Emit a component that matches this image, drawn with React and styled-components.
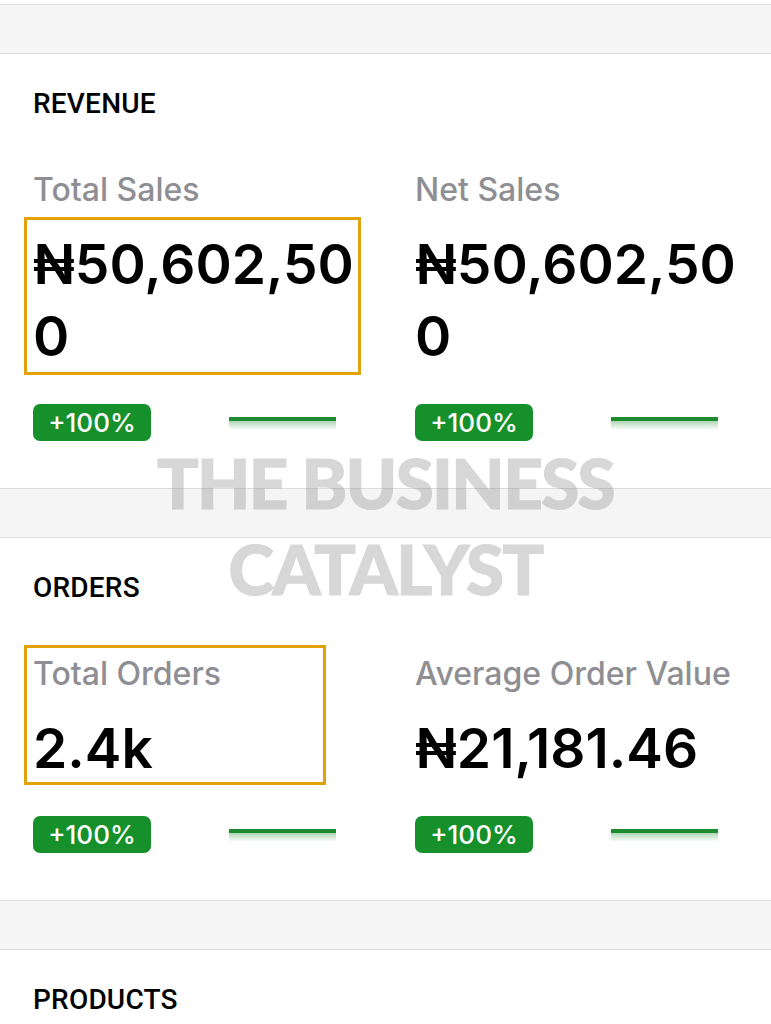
import React from 'react'
import styled, { createGlobalStyle } from 'styled-components'

const GlobalStyle = createGlobalStyle`
  html, body {
    margin: 0;
    padding: 0;
    background: #ffffff;
  }
  body {
    font-family: Roboto, "Liberation Sans", "DejaVu Sans", sans-serif;
    color: #000000;
    -webkit-font-smoothing: antialiased;
  }
`

const Page = styled.div`
  position: relative;
  width: 771px;
  height: 1024px;
  overflow: hidden;
  padding-top: 4px;
  box-sizing: border-box;
`

const Band = styled.div`
  height: 48px;
  background: #f5f5f5;
  border-top: 1px solid #dcdcdc;
  border-bottom: 1px solid #dcdcdc;
`

const Section = styled.section`
  padding: 33px 0 47px 33px;
`

const SectionTitle = styled.h2`
  margin: 0;
  font-size: 28px;
  line-height: 34px;
  font-weight: 500;
  letter-spacing: 0.2px;
  color: #000000;
`

const Grid = styled.div`
  display: grid;
  grid-template-columns: 382px 1fr;
  margin-top: 49px;
`

const Metric = styled.div`
  display: flex;
  flex-direction: column;
  min-width: 0;
`

const Label = styled.div`
  font-family: Inter, Roboto, sans-serif;
  font-size: 32px;
  line-height: 40px;
  font-weight: 500;
  color: #8e8e93;
  white-space: nowrap;
`

const Value = styled.div`
  margin-top: 18px;
  max-width: 335px;
  font-family: Inter, Roboto, "DejaVu Sans", sans-serif;
  font-size: 55px;
  line-height: 72px;
  font-weight: 600;
  color: #000000;
  word-break: break-all;
`

const Highlight = styled.div`
  position: relative;

  &::after {
    content: '';
    position: absolute;
    top: ${p => p.$top}px;
    left: ${p => p.$left}px;
    width: ${p => p.$w}px;
    height: ${p => p.$h}px;
    border: 3px solid #e3a20c;
    box-sizing: border-box;
    pointer-events: none;
  }
`

const Footer = styled.div`
  display: flex;
  align-items: center;
  gap: 78px;
  margin-top: 32px;
`

const Badge = styled.span`
  display: inline-flex;
  align-items: center;
  justify-content: center;
  width: 118px;
  height: 37px;
  border-radius: 7px;
  background: #15902a;
  color: #ffffff;
  font-family: Inter, Roboto, sans-serif;
  font-size: 26px;
  font-weight: 500;
`

const Spark = styled.svg`
  display: block;
  width: 107px;
  height: 14px;
`

const Watermark = styled.div`
  position: absolute;
  left: 0;
  right: 0;
  top: 440px;
  text-align: center;
  font-family: Lato, "Open Sans", sans-serif;
  font-weight: 900;
  font-size: 69px;
  line-height: 86px;
  letter-spacing: -1.6px;
  color: #878787;
  -webkit-text-stroke: 1.2px #878787;
  opacity: 0.33;
  pointer-events: none;
`

function Sparkline({ id }) {
  return (
    <Spark viewBox="0 0 107 14">
      <defs>
        <linearGradient id={id} x1="0" y1="0" x2="0" y2="1">
          <stop offset="0" stopColor="#1d8c2e" stopOpacity="0.35" />
          <stop offset="1" stopColor="#1d8c2e" stopOpacity="0" />
        </linearGradient>
      </defs>
      <rect x="0" y="5" width="107" height="9" fill={`url(#${id})`} />
      <rect x="0" y="1" width="107" height="4" fill="#1d8c2e" />
    </Spark>
  )
}

function MetricFooter({ id }) {
  return (
    <Footer>
      <Badge>+100%</Badge>
      <Sparkline id={id} />
    </Footer>
  )
}

export default function App() {
  return (
    <Page>
      <GlobalStyle />
      <Band />
      <Section>
        <SectionTitle>REVENUE</SectionTitle>
        <Grid>
          <Metric>
            <Label>Total Sales</Label>
            <Highlight $top={7} $left={-9} $w={337} $h={158}>
              <Value>₦50,602,500</Value>
            </Highlight>
            <MetricFooter id="g1" />
          </Metric>
          <Metric>
            <Label>Net Sales</Label>
            <Value>₦50,602,500</Value>
            <MetricFooter id="g2" />
          </Metric>
        </Grid>
      </Section>
      <Band />
      <Section>
        <SectionTitle>ORDERS</SectionTitle>
        <Grid>
          <Metric>
            <Highlight $top={-9} $left={-9} $w={302} $h={140}>
              <Label>Total Orders</Label>
              <Value>2.4k</Value>
            </Highlight>
            <MetricFooter id="g3" />
          </Metric>
          <Metric>
            <Label>Average Order Value</Label>
            <Value>₦21,181.46</Value>
            <MetricFooter id="g4" />
          </Metric>
        </Grid>
      </Section>
      <Band />
      <Section>
        <SectionTitle>PRODUCTS</SectionTitle>
      </Section>
      <Watermark>
        THE BUSINESS
        <br />
        CATALYST
      </Watermark>
    </Page>
  )
}
